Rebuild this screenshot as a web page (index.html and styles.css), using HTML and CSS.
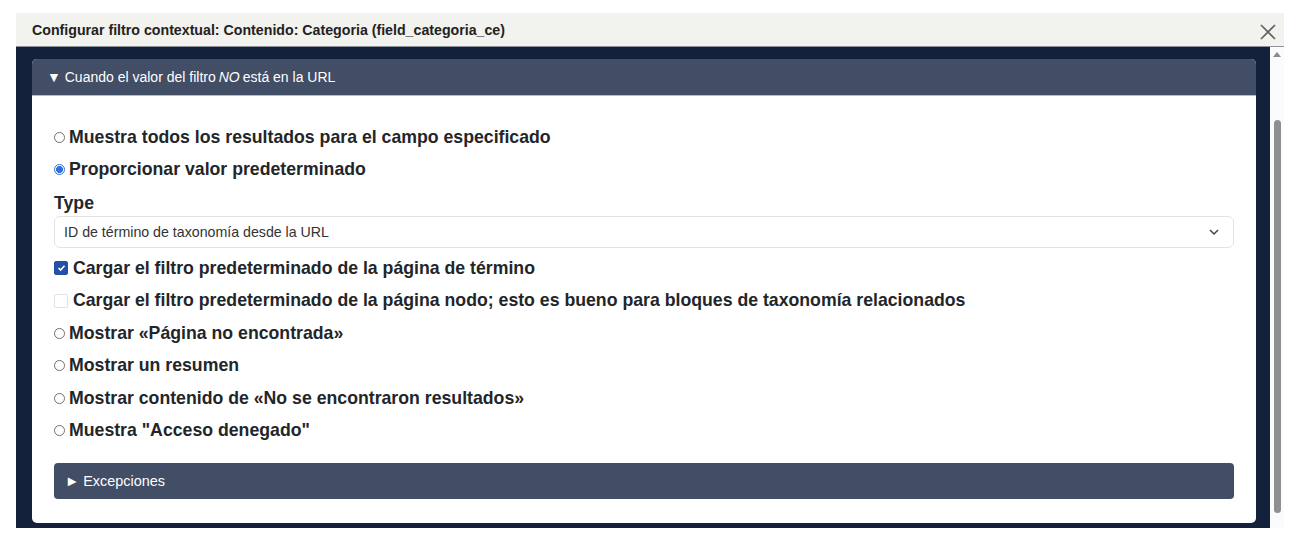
FILE: index.html
```html
<!DOCTYPE html>
<html lang="es">
<head>
<meta charset="utf-8">
<title>Configurar filtro contextual</title>
<link rel="stylesheet" href="styles.css">
</head>
<body>
<div class="dialog">
  <div class="titlebar">
    <span class="title">Configurar filtro contextual: Contenido: Categoria (field_categoria_ce)</span>
    <svg class="close" width="16" height="16" viewBox="0 0 16 16" aria-hidden="true"><path d="M1 1 L15 15 M15 1 L1 15" stroke="#5f5f5f" stroke-width="1.6" fill="none"/></svg>
  </div>
  <div class="main">
    <div class="content">
      <div class="card">
        <div class="card-head">▼ Cuando el valor del filtro <em>NO</em> está en la URL</div>
        <div class="card-body">
          <div class="opt"><span class="radio"></span>Muestra todos los resultados para el campo especificado</div>
          <div class="opt"><span class="radio on"></span>Proporcionar valor predeterminado</div>
          <div class="label">Type</div>
          <div class="select"><span>ID de término de taxonomía desde la URL</span>
            <svg width="12" height="8" viewBox="0 0 12 8" aria-hidden="true"><path d="M2 2 L6 6 L10 2" stroke="#444" stroke-width="1.5" fill="none"/></svg>
          </div>
          <div class="opt chk-row first"><span class="check on"><svg width="9" height="8" viewBox="0 0 9 8" aria-hidden="true"><path d="M1.5 4 L3.6 6 L7.5 1.8" stroke="#fff" stroke-width="1.6" fill="none"/></svg></span>Cargar el filtro predeterminado de la página de término</div>
          <div class="opt chk-row"><span class="check"></span>Cargar el filtro predeterminado de la página nodo; esto es bueno para bloques de taxonomía relacionados</div>
          <div class="opt"><span class="radio"></span>Mostrar «Página no encontrada»</div>
          <div class="opt"><span class="radio"></span>Mostrar un resumen</div>
          <div class="opt"><span class="radio"></span>Mostrar contenido de «No se encontraron resultados»</div>
          <div class="opt"><span class="radio"></span>Muestra "Acceso denegado"</div>
          <div class="subbar">► Excepciones</div>
        </div>
      </div>
    </div>
    <div class="scrollbar">
      <span class="arrow"></span>
      <span class="thumb"></span>
    </div>
  </div>
</div>
</body>
</html>
```

FILE: styles.css
```css
html, body {
  margin: 0;
  padding: 0;
  background: #ffffff;
  font-family: "Liberation Sans", Arial, sans-serif;
  color: #222;
}
.dialog {
  margin: 13px 0 0 16px;
  width: 1268px;
}
.titlebar {
  height: 33px;
  background: #f2f2ee;
  border-bottom: 1px solid #8d929b;
  display: flex;
  align-items: center;
  justify-content: space-between;
  padding: 0 8px 0 16px;
}
.title {
  font-size: 14.2px;
  font-weight: bold;
  color: #222;
}
.close {
  margin-top: 4px;
}
.main {
  display: flex;
}
.content {
  width: 1254px;
  background: #14213a;
  padding: 12px 14px 5px 16px;
  box-sizing: border-box;
}
.card {
  background: #fff;
  border-radius: 5px;
  overflow: hidden;
}
.card-head {
  height: 37px;
  background: #424d66;
  color: #fff;
  font-size: 14px;
  display: flex;
  align-items: center;
  padding-left: 15px;
  border-bottom: 1px solid #b8bcc4;
  box-sizing: border-box;
}
.card-head em {
  font-style: italic;
  margin: 0 3px;
}
.card-body {
  padding: 25px 22px 24px 22px;
}
.opt {
  height: 32.5px;
  display: flex;
  align-items: center;
  font-size: 17.7px;
  font-weight: bold;
  color: #232629;
}
.radio {
  width: 9px;
  height: 9px;
  border: 1px solid #707070;
  border-radius: 50%;
  margin-right: 4px;
  box-sizing: content-box;
  flex: none;
}
.radio.on {
  border-color: #2e6fd8;
  background: radial-gradient(circle, #2e6fd8 0 3.2px, #fff 3.8px);
}
.label {
  font-size: 17.7px;
  font-weight: bold;
  color: #232629;
  line-height: 20px;
  margin-top: 7px;
}
.select {
  margin-top: 3px;
  height: 32px;
  border: 1px solid #e3e3e3;
  border-radius: 6px;
  box-sizing: border-box;
  display: flex;
  align-items: center;
  justify-content: space-between;
  padding: 0 13px 0 9px;
  font-size: 14.2px;
  color: #333;
}
.chk-row.first {
  margin-top: 4px;
}
.check {
  width: 12px;
  height: 12px;
  border: 1px solid #e2e2e2;
  border-radius: 2px;
  margin-right: 5px;
  flex: none;
  display: flex;
  align-items: center;
  justify-content: center;
  box-sizing: content-box;
}
.check.on {
  background: #2451a6;
  border-color: #2451a6;
}
.subbar {
  margin-top: 16px;
  height: 36px;
  background: #424d66;
  border-radius: 4px;
  color: #fff;
  font-size: 14.4px;
  display: flex;
  align-items: center;
  padding-left: 11px;
}
.scrollbar {
  width: 14px;
  background: #fbfbfb;
  position: relative;
}
.arrow {
  position: absolute;
  left: 3px;
  top: 5px;
  width: 0;
  height: 0;
  border-left: 4px solid transparent;
  border-right: 4px solid transparent;
  border-bottom: 5px solid #8a8a8a;
}
.thumb {
  position: absolute;
  left: 4px;
  top: 73px;
  width: 7px;
  height: 393px;
  background: #8f8f8f;
  border-radius: 4px;
}
```
